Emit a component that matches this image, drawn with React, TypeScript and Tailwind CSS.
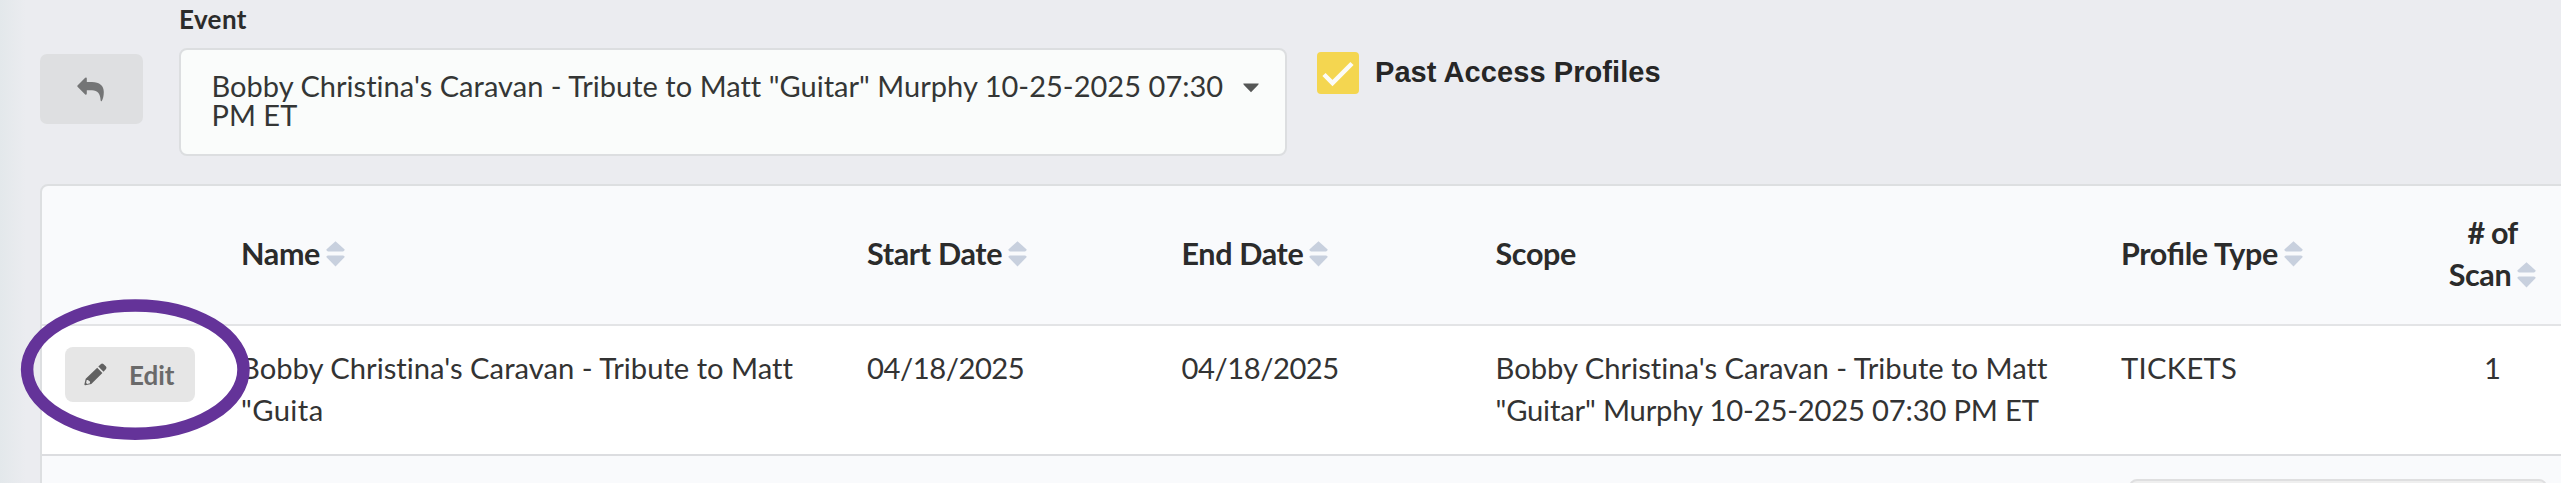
const COLS = "grid grid-cols-[199px_626px_314.5px_314px_625.5px_310px_123px]";

function SortIcon() {
  return (
    <svg className="ml-[6px] inline-block h-[26px] w-[19px] shrink-0 translate-y-[1px]" viewBox="0 0 19 26" fill="#c8d0de">
      <path d="M9.5 0.3 L18.7 8.6 Q18.6 10.4 17 10.4 H2 Q0.4 10.4 0.3 8.6 Z" />
      <path d="M9.5 25.5 L18.7 16 Q18.6 14.4 17 14.4 H2 Q0.4 14.4 0.3 16 Z" />
    </svg>
  );
}

function Header({ label, sortable = true }: { label: string; sortable?: boolean }) {
  return (
    <div className="flex items-center whitespace-nowrap">
      <span>{label}</span>
      {sortable && <SortIcon />}
    </div>
  );
}

export default function App() {
  return (
    <div className="relative h-[483px] w-full overflow-hidden bg-[#ebecf0] bg-[linear-gradient(90deg,#e3e8eb_0px,#ebecf0_26px)] font-['Lato',sans-serif] text-[#2b2b2b]">
      <div className="flex h-[184px] items-start pl-[40px]">
        <button className="mt-[54px] flex h-[70px] w-[103px] items-center justify-center rounded-[7px] bg-[#dedfe1] pr-[2px]">
          <svg className="h-[25px] w-[27px]" viewBox="0 0 27 25" fill="#747576">
            <path d="M0.5 8.6 L8.2 0.8 Q9.8 0.2 9.8 1.6 V5 H15 C22.5 5 26.8 8.8 26.8 15 C26.8 19 26 22 24.8 24 Q23.8 24.6 23.6 23.2 C23.4 16.6 20.5 13.2 15 13.2 H9.8 V16.6 Q9.8 18.2 8.2 17.4 L0.5 9.8 Q0 9.2 0.5 8.6 Z" />
          </svg>
        </button>
        <div className="ml-[36px] flex w-[1108px] flex-col pt-[3px]">
          <label className="mb-[13px] text-[26px] leading-[32px] font-bold tracking-[0.4px]">Event</label>
          <div className="flex h-[108px] items-start rounded-[8px] border-2 border-[#dcdee0] bg-[#fafcfb] pt-[22px] pr-[26px] pl-[30.5px]">
            <div className="w-[1031.5px] text-[29px] leading-[28.6px] tracking-[0.03px] text-[#343635]">
              Bobby Christina's Caravan - Tribute to Matt "Guitar" Murphy 10-25-2025 07:30 PM ET
            </div>
            <svg className="mt-[11px] h-[10px] w-[16px]" viewBox="0 0 16 10" fill="#555756">
              <path d="M0.3 0.6 H15.7 Q15.6 1.6 14.8 2.3 L8 9.3 L1.2 2.3 Q0.4 1.6 0.3 0.6 Z" />
            </svg>
          </div>
        </div>
        <div className="mt-[52px] ml-[30px] flex h-[42px] items-center">
          <div className="flex h-[42px] w-[42px] items-center justify-center rounded-[4px] bg-[#f4d650]">
            <svg className="h-[42px] w-[42px]" viewBox="0 0 42 42" fill="none" stroke="#fcfcf8" strokeWidth="4.5">
              <path d="M7 22.5 L15.5 31 L35 11.5" />
            </svg>
          </div>
          <span className="mb-[2px] ml-[16px] font-['Liberation_Sans',sans-serif] text-[29px] leading-[36px] font-bold tracking-[0.07px] whitespace-nowrap text-[#262626]">
            Past Access Profiles
          </span>
        </div>
      </div>

      <div className="ml-[40px] h-[320px] w-[2540px] rounded-tl-[8px] border-2 border-[#dddfe1] bg-[#f9fafc]">
        <div className={`${COLS} h-[140px] items-center border-b-2 border-[#e3e4e6] pb-[4px] text-[30.5px] leading-[42px] font-bold tracking-[-0.35px] [font-feature-settings:'liga'_1]`}>
          <div />
          <Header label="Name" />
          <Header label="Start Date" />
          <Header label="End Date" />
          <Header label="Scope" sortable={false} />
          <Header label="Profile Type" />
          <div className="flex flex-col items-center">
            <span className="tracking-[-0.8px]"># of</span>
            <Header label="Scan" />
          </div>
        </div>
        <div className={`${COLS} h-[130px] items-start border-b-2 border-[#dcdde0] bg-white pt-[21px] text-[29.2px] leading-[41.6px] whitespace-nowrap text-[#333333] [font-variant-ligatures:none]`}>
          <div className="pl-[23px]">
            <button className="flex h-[55px] w-[130px] items-center rounded-[8px] bg-[#e6e6e6] pl-[19px] text-[26px] leading-[32px] font-bold text-[#6a6a6a]">
              <svg className="h-[23px] w-[23px]" viewBox="0 0 23 23" fill="#616161">
                <path
                  fillRule="evenodd"
                  d="M13.2 4.8 L18.4 10 L7.3 20.9 L1.2 22.3 Q0.3 22.3 0.4 21.3 L1.7 15.8 Z M2.7 17 L2.1 20 L3.2 21 L6 20.3 L5.9 18.2 L4.6 18.1 L4.5 17 Z"
                />
                <path d="M14.3 3.6 L17 0.9 Q18.2 0 19.4 1 L22 3.6 Q23 4.8 22 6 L19.5 8.8 Z" />
              </svg>
              <span className="ml-[22px]">Edit</span>
            </button>
          </div>
          <div>
            <div>Bobby Christina's Caravan - Tribute to Matt</div>
            <div className="tracking-[0.4px]">"Guita</div>
          </div>
          <div className="tracking-[-0.45px]">04/18/2025</div>
          <div className="tracking-[-0.45px]">04/18/2025</div>
          <div>
            <div>Bobby Christina's Caravan - Tribute to Matt</div>
            <div className="tracking-[-0.18px]">"Guitar" Murphy 10-25-2025 07:30 PM ET</div>
          </div>
          <div className="tracking-[0.3px]">TICKETS</div>
          <div className="text-center">1</div>
        </div>
        <div className="pt-[23px] pl-[2087px]">
          <div className="h-[40px] w-[418px] rounded-[8px] border-2 border-[#dfdfe0] bg-[#efefef]" />
        </div>
      </div>

      <svg className="pointer-events-none absolute top-[298px] left-[20px] h-[143px] w-[231px]" viewBox="0 0 231 143" fill="none">
        <ellipse cx="115.3" cy="71.6" rx="108.2" ry="64.2" stroke="#643399" strokeWidth="12.5" />
      </svg>
    </div>
  );
}
